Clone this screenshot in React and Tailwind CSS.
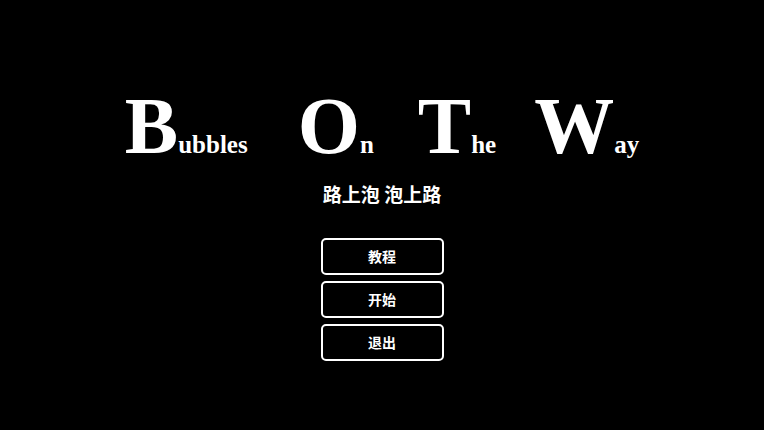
export default function App() {
  const Word = ({ big, small, className = "" }) => (
    <div className={`flex items-baseline ${className}`}>
      <span className="text-[80px] leading-none font-bold">{big}</span>
      <span className="text-[25px] leading-none font-bold">{small}</span>
    </div>
  );
  return (
    <div className="w-full h-[430px] bg-black text-white flex flex-col items-center overflow-hidden">
      <div className="flex items-baseline mt-[86px] font-['Liberation_Serif',serif]">
        <Word big="B" small="ubbles" />
        <Word big="O" small="n" className="ml-[50px]" />
        <Word big="T" small="he" className="ml-[44px]" />
        <Word big="W" small="ay" className="ml-[38px]" />
      </div>
      <div className="mt-[18px] text-[19px] leading-[19px] font-bold font-['Noto_Sans_CJK_SC',sans-serif] whitespace-pre">
        路上泡 泡上路
      </div>
      <div className="mt-[35px] flex flex-col gap-[6px] font-['Noto_Sans_CJK_SC',sans-serif]">
        {["教程", "开始", "退出"].map((t) => (
          <button
            key={t}
            className="w-[123px] h-[37px] border-2 border-white rounded-[5px] flex items-center justify-center text-[14px] font-bold text-white bg-black"
          >
            {t}
          </button>
        ))}
      </div>
    </div>
  );
}
